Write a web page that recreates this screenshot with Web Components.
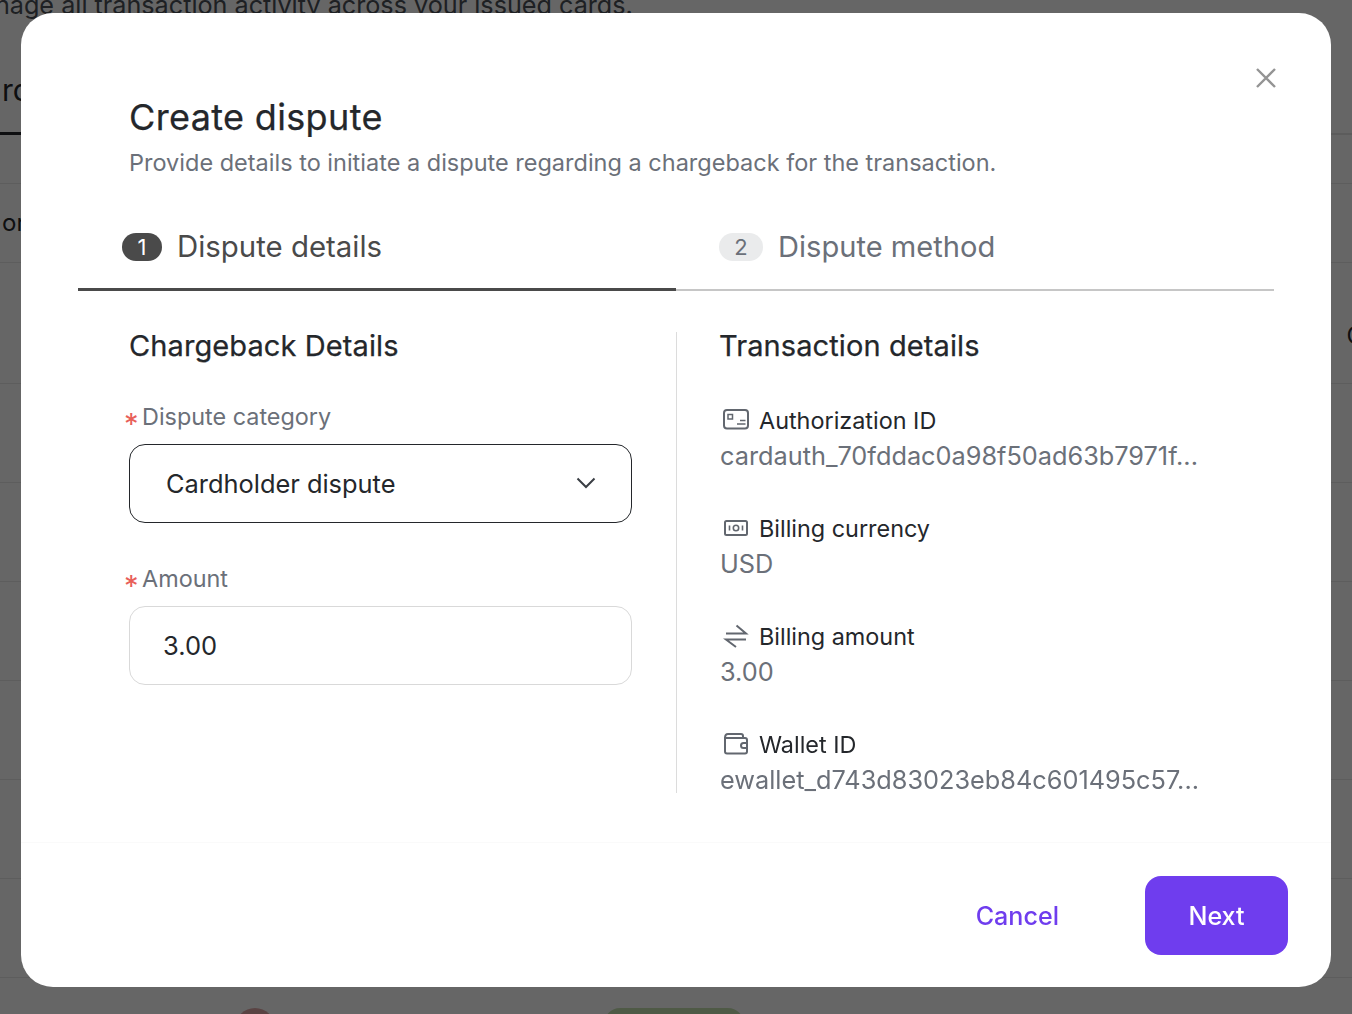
<!DOCTYPE html>
<html lang="en">
<head>
<meta charset="utf-8">
<title>Create dispute</title>
<style>
	html, body {
		margin: 0;
		height: 100%;
		overflow: hidden;
		background: #fff;
		font-family: Inter, "Noto Sans", sans-serif;
	}
</style>
</head>
<body>
<page-backdrop></page-backdrop>
<dispute-modal>
	<step-tab slot="steps" number="1" active>Dispute details</step-tab>
	<step-tab slot="steps" number="2">Dispute method</step-tab>

	<h-title slot="left-title">Chargeback Details</h-title>
	<form-field slot="left" label="Dispute category">
		<select-box>Cardholder dispute</select-box>
	</form-field>
	<form-field slot="left" label="Amount">
		<text-box>3.00</text-box>
	</form-field>

	<h-title slot="right-title">Transaction details</h-title>
	<detail-row slot="right" icon="card" label="Authorization ID">cardauth_70fddac0a98f50ad63b7971f...</detail-row>
	<detail-row slot="right" icon="note" label="Billing currency">USD</detail-row>
	<detail-row slot="right" icon="swap" label="Billing amount">3.00</detail-row>
	<detail-row slot="right" icon="wallet" label="Wallet ID">ewallet_d743d83023eb84c601495c57...</detail-row>
</dispute-modal>

<script>
class PageBackdrop extends HTMLElement {
	constructor() {
		super();
		this.attachShadow({ mode: 'open' });
		this.shadowRoot.innerHTML = `
			<style>
				:host {
					display: block;
					height: 100vh;
					overflow: hidden;
					color: #24272b;
				}
				.intro {
					font-size: 25.2px;
					line-height: 32px;
					margin: -11px 0 0 -42px;
					color: #4b5058;
					white-space: nowrap;
				}
				.tabs {
					height: 114px;
					box-sizing: border-box;
					border-bottom: 2px solid #e5e5e5;
					font-size: 30px;
					line-height: 36px;
					padding: 51px 0 0 2px;
					position: relative;
				}
				.tabs::after {
					content: '';
					position: absolute;
					left: 0;
					bottom: -2px;
					width: 40px;
					height: 3px;
					background: #24272b;
				}
				.head {
					height: 49px;
					box-sizing: border-box;
					border-bottom: 1px solid #e8e8e8;
				}
				.row {
					height: 79px;
					box-sizing: border-box;
					border-bottom: 1px solid #e8e8e8;
					font-size: 24px;
					line-height: 78px;
					padding-left: 2px;
				}
				.tall {
					height: 99px;
					box-sizing: border-box;
					border-bottom: 1px solid #e8e8e8;
					display: flex;
					justify-content: flex-end;
					font-size: 24px;
					line-height: 32px;
				}
				.tall span { margin: 57px -12px 0 0; }
				.chips {
					position: relative;
					display: flex;
					padding: 30px 0 0 235px;
					gap: 329px;
				}
				.dot { width: 40px; height: 40px; border-radius: 50%; background: #e0a9a9; }
				.pill { width: 140px; height: 40px; border-radius: 16px; background: #c5e2b0; }
			</style>
			<div class="intro">Manage all transaction activity across your issued cards.</div>
			<div class="tabs">ro</div>
			<div class="head"></div>
			<div class="row">or</div>
			<div class="tall" style="height:121px"><span>C</span></div>
			<div class="tall"></div><div class="tall"></div><div class="tall"></div>
			<div class="tall"></div><div class="tall"></div><div class="tall"></div>
			<div class="chips"><div class="dot"></div><div class="pill"></div></div>
		`;
	}
}

class HTitle extends HTMLElement {
	constructor() {
		super();
		this.attachShadow({ mode: 'open' });
		this.shadowRoot.innerHTML = `
			<style>
				:host {
					display: block;
					font-size: 29px;
					line-height: 28px;
					font-weight: 400;
					letter-spacing: 0.1px;
					-webkit-text-stroke: 0.25px #24272b;
					color: #24272b;
				}
			</style>
			<slot></slot>
		`;
	}
}

class StepTab extends HTMLElement {
	constructor() {
		super();
		this.attachShadow({ mode: 'open' });
	}

	connectedCallback() {
		this.shadowRoot.innerHTML = `
			<style>
				:host {
					display: flex;
					align-items: center;
					gap: 15px;
					flex: 0 0 598px;
					height: 78px;
					box-sizing: border-box;
					padding: 0 0 9px 43px;
					border-bottom: 2.5px solid #c6c6c6;
					font-size: 29.1px;
					color: #6b7079;
				}
				:host([active]) {
					padding: 0 0 8px 44px;
					border-bottom: 3.5px solid #4a4a4a;
					margin-bottom: -1px;
					font-size: 29.4px;
					color: #4a4a4a;
				}
				.badge {
					min-width: 44px;
					height: 28px;
					border-radius: 14px;
					background: #eaebec;
					font-size: 22px;
					line-height: 28px;
					text-align: center;
				}
				:host([active]) .badge {
					min-width: 40px;
					background: #4a4a4a;
					color: #fff;
				}
			</style>
			<span class="badge">${this.getAttribute('number')}</span>
			<span><slot></slot></span>
		`;
	}
}

class FormField extends HTMLElement {
	constructor() {
		super();
		this.attachShadow({ mode: 'open' });
	}

	connectedCallback() {
		this.shadowRoot.innerHTML = `
			<style>
				:host { display: block; }
				label {
					display: block;
					height: 28px;
					margin: 0 0 13px -5px;
					font-size: 23.4px;
					line-height: 28px;
					color: #6b7079;
				}
				.req {
					display: inline-block;
					width: 18px;
					height: 28px;
					font-size: 29px;
					line-height: 28px;
					color: #e8605a;
					vertical-align: -9px;
				}
			</style>
			<label><span class="req">*</span>${this.getAttribute('label')}</label>
			<slot></slot>
		`;
	}
}

class SelectBox extends HTMLElement {
	constructor() {
		super();
		this.attachShadow({ mode: 'open' });
		this.shadowRoot.innerHTML = `
			<style>
				:host {
					display: flex;
					align-items: center;
					justify-content: space-between;
					height: 79px;
					box-sizing: border-box;
					padding: 0 35px 1px 36px;
					border: 1.5px solid #24272b;
					border-radius: 16px;
					font-size: 25.4px;
					color: #24272b;
				}
				svg { display: block; }
			</style>
			<slot></slot>
			<svg width="20" height="12" viewBox="0 0 20 12" fill="none" stroke="#3a3e44" stroke-width="2">
				<path d="M1.5 1.5 10 10l8.500-8.500"/>
			</svg>
		`;
	}
}

class TextBox extends HTMLElement {
	constructor() {
		super();
		this.attachShadow({ mode: 'open' });
		this.shadowRoot.innerHTML = `
			<style>
				:host {
					display: flex;
					align-items: center;
					height: 79px;
					box-sizing: border-box;
					padding: 0 33px 1px;
					border: 1.5px solid #d9d9d9;
					border-radius: 16px;
					font-size: 25.5px;
					color: #24272b;
				}
			</style>
			<slot></slot>
		`;
	}
}

const DETAIL_ICONS = {
	card: `<rect x="4" y="2" width="24" height="18.500" rx="3"/>
		<rect x="8" y="6.500" width="4.500" height="4.500" stroke-width="1.500"/>
		<path stroke-width="1.500" d="M20 12.500h5.500M17 16h8.500"/>`,
	note: `<rect x="5" y="5" width="22" height="14" rx="1.500"/>
		<circle cx="16" cy="12" r="2.700" stroke-width="1.600"/>
		<path stroke-width="1.600" d="M9.500 9.500v5M22.500 9.500v5"/>`,
	swap: `<path d="M6 9.500h20L16.500 1.500M26 15.500H6l10 7.500"/>`,
	wallet: `<path d="M5 6V19.500a2 2 0 0 0 2 2H25a2 2 0 0 0 2-2V8a2 2 0 0 0-2-2H5Z"/>
		<path d="M5 6c0-2.500 1.500-4 3-4H21a2 2 0 0 1 2 2v2"/>
		<path d="M27 11h-3.500a2.500 2.500 0 0 0 0 5H27"/>`
};

class DetailRow extends HTMLElement {
	constructor() {
		super();
		this.attachShadow({ mode: 'open' });
	}

	connectedCallback() {
		const icon = DETAIL_ICONS[this.getAttribute('icon')];
		this.shadowRoot.innerHTML = `
			<style>
				:host { display: block; height: 108px; }
				.head {
					display: flex;
					align-items: center;
					gap: 7px;
					height: 36px;
					font-size: 23.4px;
					color: #24272b;
				}
				svg { display: block; flex: none; margin-left: 1px; }
				.value {
					height: 36px;
					line-height: 36px;
					padding-left: 1px;
					font-size: 25.3px;
					color: #6b7079;
					white-space: nowrap;
				}
			</style>
			<div class="head">
				<svg width="32" height="24" viewBox="0 0 32 24" fill="none" stroke="#62676f" stroke-width="2">${icon}</svg>
				<span>${this.getAttribute('label')}</span>
			</div>
			<div class="value"><slot></slot></div>
		`;
	}
}

class DisputeModal extends HTMLElement {
	constructor() {
		super();
		this.attachShadow({ mode: 'open' });
		this.shadowRoot.innerHTML = `
			<style>
				:host {
					position: fixed;
					inset: 0;
					background: rgba(0, 0, 0, 0.6);
					display: block;
				}
				.dialog {
					position: absolute;
					left: 21px;
					top: 13px;
					width: 1310px;
					height: 974px;
					background: #fff;
					border-radius: 32px;
					display: flex;
					flex-direction: column;
				}
				.close {
					position: absolute;
					left: 1234px;
					top: 54px;
					display: block;
				}
				header { padding: 82px 0 0 108px; }
				h1 {
					margin: 0;
					font-size: 36px;
					line-height: 44px;
					font-weight: 400;
					letter-spacing: 0.35px;
					-webkit-text-stroke: 0.25px #24272b;
					color: #24272b;
				}
				header p {
					margin: 8px 0 0;
					font-size: 23.5px;
					line-height: 32px;
					color: #6b7079;
				}
				.steps {
					display: flex;
					margin: 34px 57px 0;
				}
				.body {
					display: flex;
					margin: 41px 57px 0;
					height: 461px;
				}
				.col-left {
					width: 599px;
					box-sizing: border-box;
					padding: 0 44px 0 51px;
					border-right: 1px solid #dcdcdc;
				}
				.col-right { padding-left: 42px; }
				.fields {
					display: flex;
					flex-direction: column;
					gap: 42px;
					margin-top: 43px;
				}
				.rows { margin-top: 42px; }
				footer {
					margin-top: 49px;
					border-top: 1px solid #fafafa;
					padding: 33px 43px 0 0;
					display: flex;
					justify-content: flex-end;
					align-items: center;
					gap: 86px;
					font-size: 25.1px;
					font-weight: 500;
				}
				.cancel { color: #6f3dee; }
				.next {
					width: 143px;
					height: 79px;
					border-radius: 16px;
					background: #6f3dee;
					color: #fff;
					display: flex;
					align-items: center;
					justify-content: center;
				}
			</style>
			<div class="dialog">
				<svg class="close" width="22" height="22" viewBox="0 0 22 22" fill="none" stroke="#949494" stroke-width="2.400">
					<path d="M2 2 20 20M20 2 2 20"/>
				</svg>
				<header>
					<h1>Create dispute</h1>
					<p>Provide details to initiate a dispute regarding a chargeback for the transaction.</p>
				</header>
				<div class="steps"><slot name="steps"></slot></div>
				<div class="body">
					<section class="col-left">
						<slot name="left-title"></slot>
						<div class="fields"><slot name="left"></slot></div>
					</section>
					<section class="col-right">
						<slot name="right-title"></slot>
						<div class="rows"><slot name="right"></slot></div>
					</section>
				</div>
				<footer>
					<span class="cancel">Cancel</span>
					<span class="next">Next</span>
				</footer>
			</div>
		`;
	}
}

customElements.define('page-backdrop', PageBackdrop);
customElements.define('h-title', HTitle);
customElements.define('step-tab', StepTab);
customElements.define('form-field', FormField);
customElements.define('select-box', SelectBox);
customElements.define('text-box', TextBox);
customElements.define('detail-row', DetailRow);
customElements.define('dispute-modal', DisputeModal);
</script>
</body>
</html>
